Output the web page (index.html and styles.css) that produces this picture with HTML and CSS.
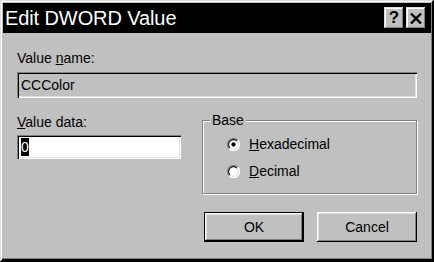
FILE: index.html
```html
<!DOCTYPE html>
<html lang="en">
<head>
  <meta charset="UTF-8">
  <title>Edit DWORD Value</title>
  <link rel="stylesheet" href="styles.css">
</head>
<body>

<div class="dialog">
  <!--标题栏-->
  <div class="titlebar">
    <span class="title">Edit DWORD Value</span>
    <div class="title-btns">
      <span class="tbtn help">?</span>
      <span class="tbtn close">
        <svg width="12" height="11" viewBox="0 0 12 11">
          <path d="M1 0.5 L11 10.5 M11 0.5 L1 10.5" stroke="#000" stroke-width="2.4" fill="none"/>
        </svg>
      </span>
    </div>
  </div>

  <div class="content">
    <div class="label">Value <u>n</u>ame:</div>
    <div class="field field-name">CCColor</div>

    <div class="row">
      <div class="data-col">
        <div class="label"><u>V</u>alue data:</div>
        <div class="field field-data"><span class="sel">0</span></div>
      </div>

      <div class="group">
        <span class="legend">Base</span>
        <div class="radio">
          <svg class="dot" width="13" height="13" viewBox="0 0 12 12">
            <circle cx="6" cy="6" r="5.5" fill="#fff"/>
            <path d="M2 10 A5.5 5.5 0 0 1 10 2" stroke="#808080" stroke-width="1" fill="none"/>
            <path d="M2.8 9.2 A4.5 4.5 0 0 1 9.2 2.8" stroke="#000" stroke-width="1" fill="none"/>
            <path d="M10 2 A5.5 5.5 0 0 1 2 10" stroke="#fff" stroke-width="1" fill="none"/>
            <path d="M9.2 2.8 A4.5 4.5 0 0 1 2.8 9.2" stroke="#dfdfdf" stroke-width="1" fill="none"/>
            <circle cx="6" cy="6" r="2" fill="#000"/>
          </svg>
          <span><u>H</u>exadecimal</span>
        </div>
        <div class="radio">
          <svg class="dot" width="13" height="13" viewBox="0 0 12 12">
            <circle cx="6" cy="6" r="5.5" fill="#fff"/>
            <path d="M2 10 A5.5 5.5 0 0 1 10 2" stroke="#808080" stroke-width="1" fill="none"/>
            <path d="M2.8 9.2 A4.5 4.5 0 0 1 9.2 2.8" stroke="#000" stroke-width="1" fill="none"/>
            <path d="M10 2 A5.5 5.5 0 0 1 2 10" stroke="#fff" stroke-width="1" fill="none"/>
            <path d="M9.2 2.8 A4.5 4.5 0 0 1 2.8 9.2" stroke="#dfdfdf" stroke-width="1" fill="none"/>
          </svg>
          <span><u>D</u>ecimal</span>
        </div>
      </div>
    </div>

    <div class="buttons">
      <a href="javascript:;" class="btn btn-default">OK</a>
      <a href="javascript:;" class="btn">Cancel</a>
    </div>
  </div>
</div>

</body>
</html>
```

FILE: styles.css
```css
* {
  margin: 0;
  padding: 0;
  box-sizing: border-box;
}

body {
  background-color: #c0c0c0;
  font: 14px/16px "Liberation Sans", Arial, sans-serif;
  color: #000;
}

.dialog {
  width: 434px;
  height: 262px;
  padding: 3px;
  background-color: #c0c0c0;
  box-shadow: inset -1px -1px #000, inset 1px 1px #dfdfdf,
              inset -2px -2px #000, inset 2px 2px #fff,
              inset 0 -3px #000,
              inset -3px -4px #808080;
}

/* 标题栏 */
.titlebar {
  height: 30px;
  background-color: #000;
  color: #fff;
  display: flex;
  align-items: center;
  justify-content: space-between;
  padding: 0 5px 0 2px;
}

.title {
  font-size: 20px;
  line-height: 24px;
  letter-spacing: -0.1px;
}

.title-btns {
  display: flex;
  gap: 2px;
}

.tbtn {
  width: 20px;
  height: 22px;
  background-color: #c0c0c0;
  color: #000;
  display: flex;
  align-items: center;
  justify-content: center;
  font-weight: 700;
  font-size: 17px;
  box-shadow: inset -1px -1px #000, inset 1px 1px #dfdfdf,
              inset -2px -2px #808080, inset 2px 2px #fff;
}

.content {
  padding: 17px 14px 0 14px;
}

.field {
  box-shadow: inset 1px 1px #808080, inset 2px 2px #000,
              inset -1px -1px #fff, inset -2px -2px #dfdfdf;
}

.field-name {
  width: 400px;
  height: 26px;
  margin-top: 6px;
  padding-left: 4px;
  line-height: 26px;
}

.row {
  display: flex;
  margin-top: 16px;
}

.data-col {
  width: 164px;
}

.field-data {
  height: 24px;
  margin-top: 5px;
  background-color: #fff;
  padding: 3px 0 0 4px;
}

.sel {
  display: inline-block;
  background-color: #000;
  color: #fff;
  width: 8px;
  height: 18px;
  line-height: 18px;
  text-align: center;
}

/* 分组框 */
.group {
  position: relative;
  width: 215px;
  height: 74px;
  margin: 6px 0 0 21px;
  border: 1px solid #808080;
  box-shadow: inset 1px 1px #fff, 1px 1px #fff;
  padding: 15px 0 0 24px;
}

.legend {
  position: absolute;
  top: -9px;
  left: 7px;
  padding: 0 2px;
  background-color: #c0c0c0;
}

.radio {
  display: flex;
  align-items: center;
  height: 16px;
  margin-bottom: 11px;
}

.radio .dot {
  margin-right: 9px;
}

/* 按钮 */
.buttons {
  display: flex;
  justify-content: flex-end;
  gap: 13px;
  margin-top: 18px;
}

.btn {
  width: 100px;
  height: 30px;
  line-height: 30px;
  text-align: center;
  text-decoration: none;
  color: #000;
  background-color: #c0c0c0;
  box-shadow: inset -1px -1px #000, inset 1px 1px #fff,
              inset -2px -2px #808080, inset 2px 2px #dfdfdf;
}

.btn-default {
  border: 1px solid #000;
  line-height: 28px;
  box-shadow: inset -1px -1px #000, inset 1px 1px #fff,
              inset -2px -2px #808080, inset 2px 2px #dfdfdf;
}
```
